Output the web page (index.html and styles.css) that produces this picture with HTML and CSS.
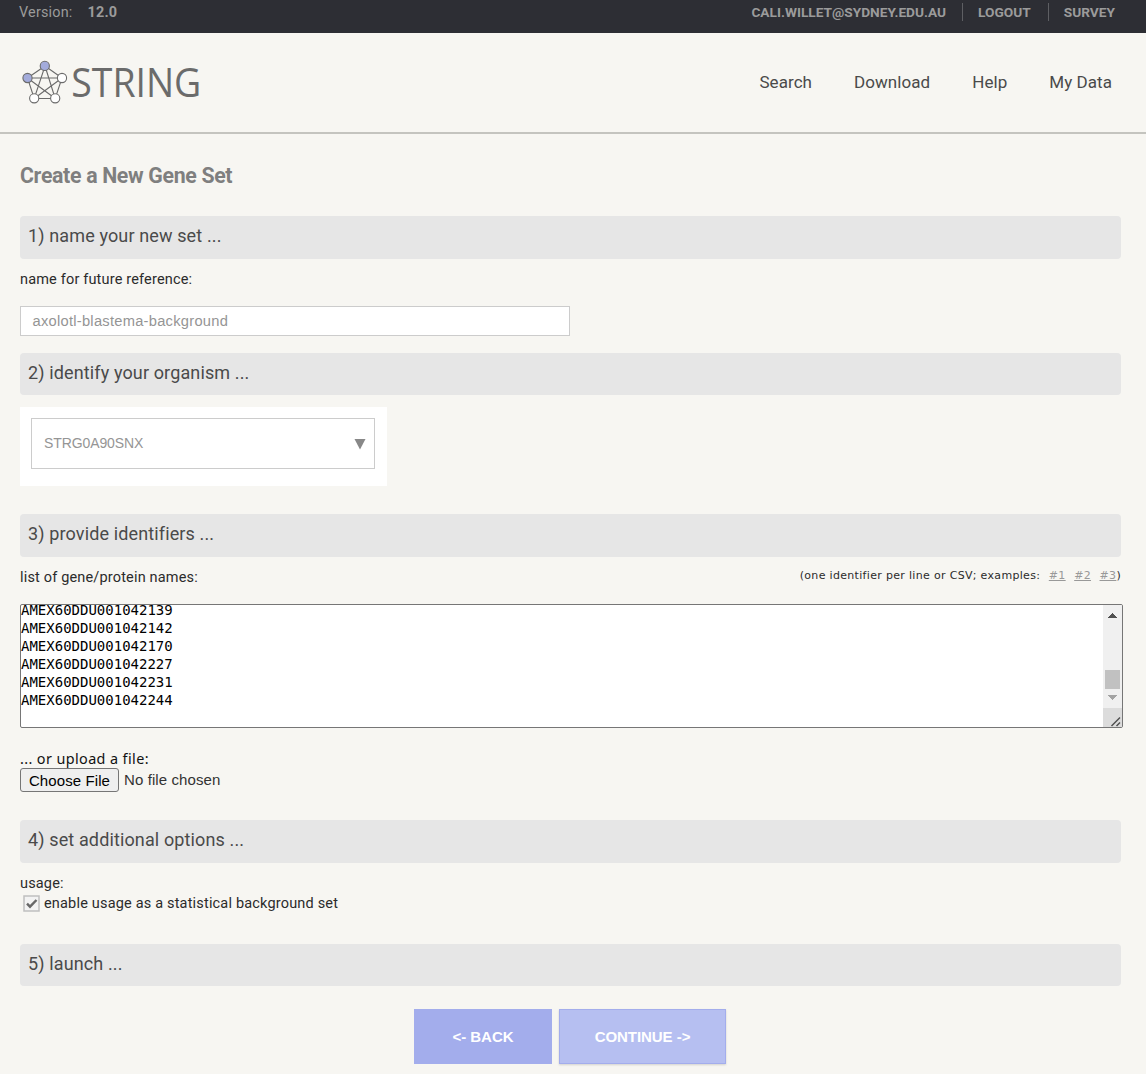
FILE: index.html
```html
<!DOCTYPE html>
<html lang="en">
<head>
<meta charset="utf-8">
<title>STRING: Create a New Gene Set</title>
<link rel="stylesheet" href="styles.css">
</head>
<body>
<div class="topbar">
  <div class="version"><span>Version:</span><b>12.0</b></div>
  <nav class="account">
    <a class="user">CALI.WILLET@SYDNEY.EDU.AU</a><a class="logout">LOGOUT</a><a class="survey">SURVEY</a>
  </nav>
</div>
<header class="header">
  <svg class="logo" width="184" height="50" viewBox="0 0 184 50" role="img" aria-label="STRING">
    <g fill="none" stroke="#6b6b6b" stroke-width="1.100">
      <path d="M25 9 42 21 35.200 41.500 14.200 41.500 7.500 21ZM25 9 35.200 41.500 7.500 21 42 21 14.200 41.500Z"/>
      <circle cx="24.800" cy="8.900" r="4.600" fill="#a3abdb"/>
      <circle cx="7.500" cy="21" r="4.600" fill="#a3abdb"/>
      <circle cx="42" cy="21" r="4.600" fill="#fff"/>
      <circle cx="14.200" cy="41.300" r="4.600" fill="#fff"/>
      <circle cx="35.200" cy="41.300" r="4.600" fill="#fff"/>
    </g>
    <text class="wordmark" x="51.300" y="39.500" textLength="130" lengthAdjust="spacingAndGlyphs">STRING</text>
  </svg>
  <nav class="menu"><a class="search">Search</a><a class="download">Download</a><a class="help">Help</a><a class="mydata">My Data</a></nav>
</header>
<main class="content">
  <h1 class="title"><span>Create a New Gene Set</span></h1>

  <h2 class="section"><span class="s1">1) name your new set ...</span></h2>
  <div class="label name-label">name for future reference:</div>
  <div class="name-input"><span>axolotl-blastema-background</span></div>

  <h2 class="section short"><span class="s2">2) identify your organism ...</span></h2>
  <div class="organism">
    <div class="select"><span>STRG0A90SNX</span>
      <svg width="12" height="12" viewBox="0 0 12 12"><path d="M.5 1H11.500L6 11.500Z" fill="#888"/></svg>
    </div>
  </div>

  <h2 class="section"><span class="s3">3) provide identifiers ...</span></h2>
  <div class="list-head">
    <div class="label list-label">list of gene/protein names:</div>
    <div class="examples"><span class="hint">(one identifier per line or CSV; examples:</span><a>#1</a><a>#2</a><a>#3</a><span>)</span></div>
  </div>
  <div class="textarea">
<pre class="lines">AMEX60DDU001042139
AMEX60DDU001042142
AMEX60DDU001042170
AMEX60DDU001042227
AMEX60DDU001042231
AMEX60DDU001042244</pre>
    <svg class="scroll" width="19" height="122" viewBox="0 0 19 122" shape-rendering="crispEdges">
      <path fill="#f0f0f0" d="M0 0h19v103H0z"/>
      <path fill="#dcdcdc" d="M0 103h19v19H0z"/>
      <path fill="#505050" d="M5 13h9v-1h-1v-1h-1v-1h-1v-1h-1V8H9v1H8v1H7v1H6v1H5z"/>
      <path fill="#c1c1c1" d="M2 65h15v19H2z"/>
      <path fill="#a3a3a3" d="M5 90h9v1h-1v1h-1v1h-1v1h-1v1H9v-1H8v-1H7v-1H6v-1H5z"/>
      <path d="M8.500 121 17 112.500M13.500 121 17 117.500" stroke="#505050" stroke-width="1.500" shape-rendering="auto"/>
    </svg>
  </div>
  <div class="upload-label"><span>... or upload a file:</span></div>
  <div class="file"><span class="choose"><span>Choose File</span></span><span class="nofile">No file chosen</span></div>

  <h2 class="section"><span class="s4">4) set additional options ...</span></h2>
  <div class="label usage">usage:</div>
  <div class="label option">
    <svg width="17" height="17" viewBox="0 0 17 17"><path d="M1 1H16V16H1Z" fill="#f3f3f3" stroke="#c0c0c0" stroke-width="1.500"/><path d="M4 8.700 7 11.700 13.500 5" fill="none" stroke="#686868" stroke-width="2.400"/></svg>
    <span>enable usage as a statistical background set</span>
  </div>

  <h2 class="section short"><span class="s5">5) launch ...</span></h2>
  <div class="actions"><a class="back"><span>&lt;- BACK</span></a><a class="continue"><span>CONTINUE -&gt;</span></a></div>
</main>
</body>
</html>
```
FILE: styles.css
```css
* { box-sizing: border-box; }
body { margin: 0; height: 1074px; overflow: hidden; background: #f7f6f2; font-family: Roboto, sans-serif; color: #2b2b2b; }

.topbar { height: 33px; background: #2d2e34; color: #9b9b9b; display: flex; justify-content: space-between; padding: 0 31px 0 19px; line-height: 25px; }
.version { display: flex; gap: 15px; font-size: 14.4px; letter-spacing: .2px; }
.account { display: flex; font-size: 13.7px; font-weight: 700; height: 18px; margin-top: 3px; line-height: 19px; }
.logout, .survey { border-left: 1px solid #5e5f63; padding-left: 15px; margin-left: 16px; }
.survey { margin-left: 17px; }

.header { height: 101px; border-bottom: 2px solid #c4c4bf; display: flex; justify-content: space-between; padding: 24px 34px 0 20px; }
.logo { overflow: visible; }
.wordmark { font: 39.5px "Open Sans", sans-serif; fill: #6b6b6b; }
.menu { display: flex; gap: 42px; font-size: 17px; line-height: 50px; color: #4a4a4a; letter-spacing: .06px; }

.content { padding: 30px 25px 0 20px; }
.title { margin: 0 0 28px; font-size: 21.3px; line-height: 24px; height: 24px; color: #7f7f7f; font-weight: 700; letter-spacing: -.33px; }
.section { margin: 0; height: 43px; border-radius: 4px; background: #e6e6e6; padding-left: 8px; font-size: 18px; line-height: 40px; font-weight: 400; color: #4a4a4a; letter-spacing: .13px; }
.short { height: 42px; }
.label { font-size: 14.5px; line-height: 22px; height: 20px; letter-spacing: .17px; }
.name-label { margin-top: 10px; }
.name-input { width: 550px; height: 30px; margin: 17px 0; border: 1px solid #ccc; background: #fff; padding-left: 11.5px; font: 14.7px/28px "Liberation Sans", sans-serif; letter-spacing: .26px; color: #959595; }

.organism { width: 367px; height: 79px; margin: 12px 0 28px; background: #fff; padding: 11px; }
.select { width: 344px; height: 51px; border: 1px solid #ccc; padding: 0 8px 0 12px; display: flex; align-items: center; justify-content: space-between; font: 14px "Liberation Sans", sans-serif; letter-spacing: -.1px; color: #959595; }
.select span { padding-bottom: 2px; }

.list-head { display: flex; justify-content: space-between; padding-top: 8px; height: 47px; }
.list-label { margin-top: 2px; }
.examples { display: flex; font: 11px/22px "DejaVu Sans", Verdana, sans-serif; letter-spacing: .32px; }
.examples a { color: #999; text-decoration: underline; margin-left: 8.5px; }
.textarea { width: 1103px; height: 124px; border: 1px solid #767676; border-radius: 2px; background: #fff; display: flex; justify-content: space-between; overflow: hidden; }
.lines { margin: -4px 0 0; height: 108px; font: 14px/18px "DejaVu Sans Mono", monospace; color: #000; }
.scroll { flex: none; }
.upload-label { margin-top: 21px; height: 19px; font: 14.4px/20px "Noto Sans", sans-serif; letter-spacing: .39px; color: #111; }
.file { display: flex; gap: 5px; height: 24px; margin-bottom: 28px; font: 15px/24px "Liberation Sans", sans-serif; color: #333; }
.nofile { letter-spacing: .1px; }
.choose { width: 99px; border: 1px solid #767676; border-radius: 3px; background: #efefef; color: #000; text-align: center; line-height: 24px; letter-spacing: .1px; }
.usage { margin-top: 10px; }
.option { display: flex; gap: 4px; padding-left: 3px; margin-bottom: 31px; letter-spacing: .18px; }
.option svg { margin-top: 2px; flex: none; }

.actions { display: flex; gap: 7px; margin: 23px 0 0 394px; font: 700 15px/55px "Liberation Sans", sans-serif; color: #fff; text-align: center; letter-spacing: -.05px; }
.back { width: 138px; height: 55px; background: #a3adec; }
.continue { width: 167px; height: 55px; background: #b6bff1; border: 1px solid #a3adec; line-height: 53px; box-shadow: 0 1px 2px rgba(0,0,0,.15); }
```
